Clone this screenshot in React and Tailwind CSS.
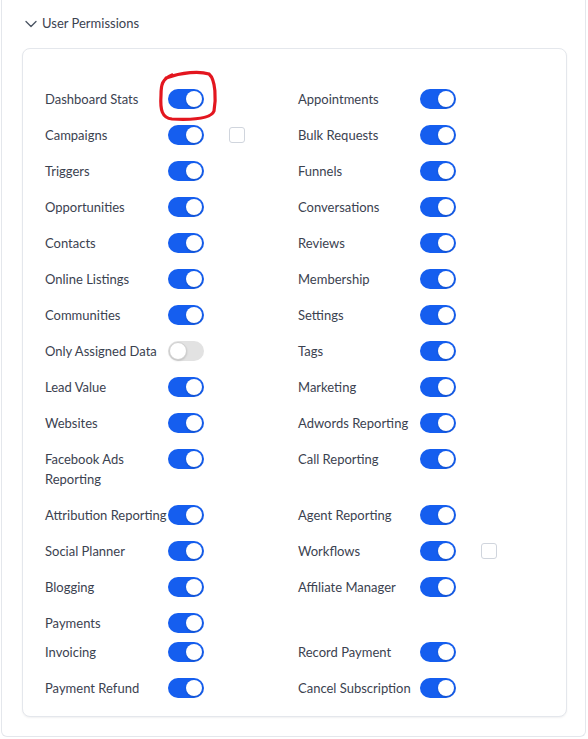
import React from "react";

const rows = [
  [{ l: "Dashboard Stats" }, { l: "Appointments" }],
  [{ l: "Campaigns", cb: true }, { l: "Bulk Requests" }],
  [{ l: "Triggers" }, { l: "Funnels" }],
  [{ l: "Opportunities" }, { l: "Conversations" }],
  [{ l: "Contacts" }, { l: "Reviews" }],
  [{ l: "Online Listings" }, { l: "Membership" }],
  [{ l: "Communities" }, { l: "Settings" }],
  [{ l: "Only Assigned Data", off: true }, { l: "Tags" }],
  [{ l: "Lead Value" }, { l: "Marketing" }],
  [{ l: "Websites" }, { l: "Adwords Reporting" }],
  [{ l: "Facebook Ads Reporting" }, { l: "Call Reporting" }],
  [{ l: "Attribution Reporting" }, { l: "Agent Reporting" }],
  [{ l: "Social Planner" }, { l: "Workflows", cb: true }],
  [{ l: "Blogging" }, { l: "Affiliate Manager" }],
  [{ l: "Payments" }, null, "tight"],
  [{ l: "Invoicing" }, { l: "Record Payment" }],
  [{ l: "Payment Refund" }, { l: "Cancel Subscription" }, "last"],
];

function Toggle({ off }) {
  if (off) {
    return (
      <div className="relative h-5 w-9 shrink-0 rounded-full bg-[#e2e2e2]">
        <div className="absolute left-[1px] top-[1px] h-[18px] w-[18px] rounded-full bg-white border border-[#cfcfcf] shadow-[0_1px_2px_rgba(0,0,0,0.15)]" />
      </div>
    );
  }
  return (
    <div className="relative h-5 w-9 shrink-0 rounded-full bg-[#155eef]">
      <div className="absolute right-[2px] top-[2px] h-4 w-4 rounded-full bg-white shadow-[0_1px_2px_rgba(16,24,40,0.2)]" />
    </div>
  );
}

function Cell({ item, right }) {
  if (!item) return <div />;
  return (
    <div className="flex items-start">
      <div className={(right ? "w-[122px]" : "w-[123px]") + " shrink-0 text-[13px] leading-5 text-[#3b4250]"}>{item.l}</div>
      <Toggle off={item.off} />
      {item.cb && (
        <div className="ml-[25px] mt-[2px] h-4 w-4 rounded-[3px] border border-[#d0d5dd] bg-white" />
      )}
    </div>
  );
}

export default function App() {
  return (
    <div className="relative h-[739px] w-[588px] bg-white" style={{ fontFamily: "Lato, 'Open Sans', sans-serif" }}>
      <div className="ml-px w-[585px] rounded-b-[6px] border border-t-0 border-[#e4e7ec] pl-[20px] pr-[18px] pb-[19px]">
        <div className="flex h-[48px] items-center">
          <svg width="20" height="20" viewBox="0 0 24 24" fill="none" stroke="#4b5563" strokeWidth="1.6" strokeLinecap="round" strokeLinejoin="round" className="-ml-[1px]">
            <path d="m6 9 6 6 6-6" />
          </svg>
          <span className="ml-[1px] text-[13px] text-[#3b4250]">User Permissions</span>
        </div>
        <div className="rounded-lg border border-[#e4e7ec] bg-white pl-[22px] pt-[40px] pb-[18px] shadow-[0_1px_2px_rgba(16,24,40,0.06)]">
          {rows.map((r, i) => (
            <div
              key={i}
              className={
                "grid grid-cols-[253px_253px] " +
                (r[2] === "tight" ? "mb-[9px]" : r[2] === "last" ? "" : "mb-4")
              }
            >
              <Cell item={r[0]} />
              <Cell item={r[1]} right />
            </div>
          ))}
        </div>
      </div>
      <svg className="pointer-events-none absolute left-0 top-0" width="588" height="739">
        <path
          d="M166 78 C 182 72, 200 71, 209 74 C 216 80, 216 100, 214 111 C 211 119, 192 120, 172 119 C 162 118, 160 110, 161 95 C 161 85, 162 79, 172 75"
          fill="none"
          stroke="#e3161f"
          strokeWidth="3.2"
          strokeLinecap="round"
        />
      </svg>
    </div>
  );
}
